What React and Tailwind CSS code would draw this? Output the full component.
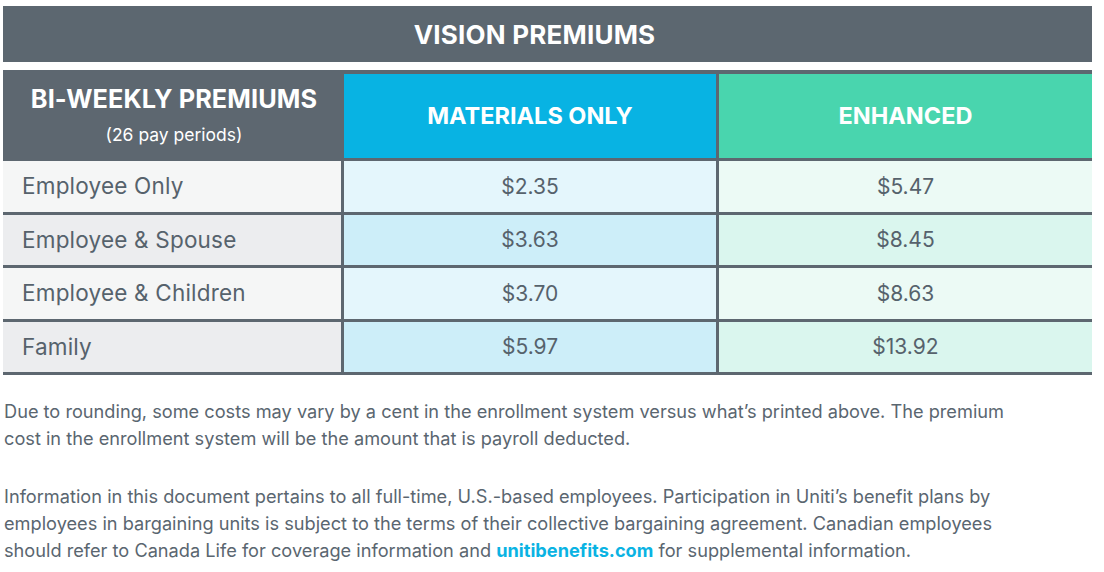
import React from "react";

const rows = [
  { label: "Employee Only", mat: "$2.35", enh: "$5.47" },
  { label: "Employee & Spouse", mat: "$3.63", enh: "$8.45" },
  { label: "Employee & Children", mat: "$3.70", enh: "$8.63" },
  { label: "Family", mat: "$5.97", enh: "$13.92" },
];

const App = () => {
  return (
    <div
      className="w-[1104px] h-[572px] bg-white pt-[6px] pl-[3px] overflow-hidden"
      style={{ fontFamily: "Inter, 'Liberation Sans', sans-serif" }}
    >
      <div className="w-[1089px] h-[56px] bg-[#5c6770] flex items-center justify-center pr-[26px]">
        <h1 className="text-white font-bold text-[26px] tracking-[0.2px]">
          VISION PREMIUMS
        </h1>
      </div>

      <div className="mt-[8px] w-[1089px] bg-[#5d6770] pt-[4px] pb-[3px] grid grid-cols-[338px_372px_373px] gap-x-[3px] gap-y-[3px]">
        {/* header row */}
        <div className="h-[84px] flex flex-col items-center justify-center text-white pl-[4px]">
          <div className="font-bold text-[25.3px] leading-none tracking-[0.1px] mt-[-3px]">
            BI-WEEKLY PREMIUMS
          </div>
          <div className="text-[17.5px] mt-[15px] leading-none">(26 pay periods)</div>
        </div>
        <div className="h-[84px] bg-[#08b3e3] flex items-center justify-center text-white font-bold text-[23.5px]">
          MATERIALS ONLY
        </div>
        <div className="h-[84px] bg-[#49d5ae] flex items-center justify-center text-white font-bold text-[23.5px]">
          ENHANCED
        </div>

        {rows.map((r, i) => {
          const odd = i % 2 === 1;
          return (
            <React.Fragment key={r.label}>
              <div
                className={`h-[50.5px] flex items-center pl-[19px] text-[22.5px] tracking-[0.2px] text-[#56626c] ${
                  odd ? "bg-[#ecedef]" : "bg-[#f5f6f6]"
                }`}
              >
                {r.label}
              </div>
              <div
                className={`h-[50.5px] flex items-center justify-center text-[21px] text-[#56626c] ${
                  odd ? "bg-[#cdeef9]" : "bg-[#e4f6fc]"
                }`}
              >
                {r.mat}
              </div>
              <div
                className={`h-[50.5px] flex items-center justify-center text-[21px] text-[#56626c] ${
                  odd ? "bg-[#daf6ee]" : "bg-[#ecfaf5]"
                }`}
              >
                {r.enh}
              </div>
            </React.Fragment>
          );
        })}
      </div>

      <div className="mt-[23px] pl-[1px] text-[18.2px] leading-[27px] text-[#5a6670]">
        <p>
          Due to rounding, some costs may vary by a cent in the enrollment system versus what’s printed above. The premium
          <br />
          cost in the enrollment system will be the amount that is payroll deducted.
        </p>
        <p className="mt-[31px]">
          Information in this document pertains to all full-time, U.S.-based employees. Participation in Uniti’s benefit plans by
          <br />
          employees in bargaining units is subject to the terms of their collective bargaining agreement. Canadian employees
          <br />
          should refer to Canada Life for coverage information and{" "}
          <span className="font-bold text-[#0ab3e3]">unitibenefits.com</span> for supplemental information.
        </p>
      </div>
    </div>
  );
};

export default App;
